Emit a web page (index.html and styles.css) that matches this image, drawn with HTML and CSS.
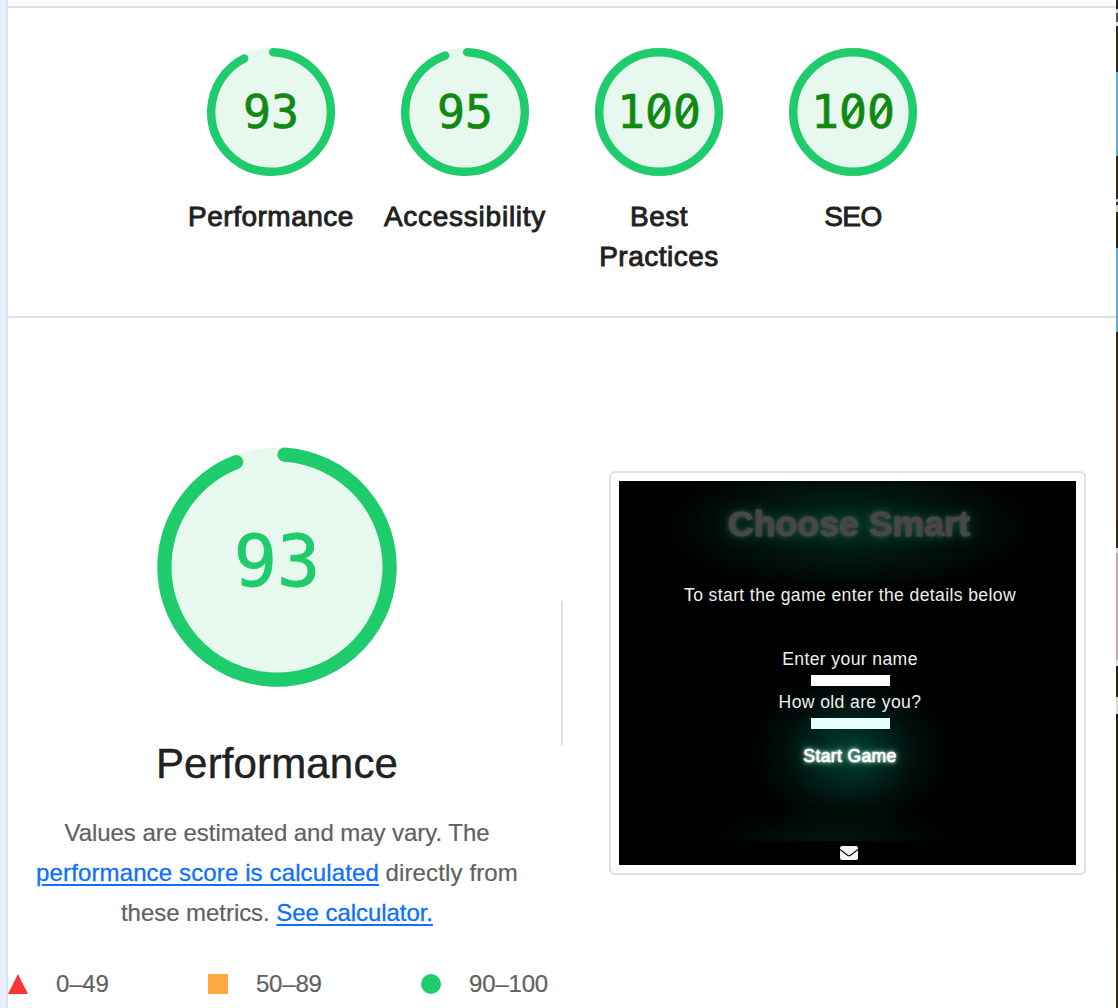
FILE: index.html
```
<!DOCTYPE html>
<html lang="en">
<head>
<meta charset="utf-8">
<title>Report</title>
<link rel="stylesheet" href="styles.css">
</head>
<body>
<div class="page">
  <div class="rail"></div>
  <main class="report">
    <section class="scores">
      <div class="score">
        <svg class="gauge" viewBox="0 0 128 128">
          <circle class="base" cx="64" cy="64" r="64"/>
          <circle class="arc" cx="64" cy="64" r="59.8" stroke-dasharray="345.3 400" transform="rotate(-88 64 64)"/>
          <text class="num" x="64" y="80">93</text>
        </svg>
        <div class="label">Performance</div>
      </div>
      <div class="score">
        <svg class="gauge" viewBox="0 0 128 128">
          <circle class="base" cx="64" cy="64" r="64"/>
          <circle class="arc" cx="64" cy="64" r="59.8" stroke-dasharray="353 400" transform="rotate(-88 64 64)"/>
          <text class="num" x="64" y="80">95</text>
        </svg>
        <div class="label access">Accessibility</div>
      </div>
      <div class="score">
        <svg class="gauge" viewBox="0 0 128 128">
          <circle class="base" cx="64" cy="64" r="64"/>
          <circle class="arc" cx="64" cy="64" r="59.8"/>
          <text class="num" x="64" y="80">100</text>
          <ellipse class="hole" cx="64" cy="63" rx="5" ry="10"/>
          <ellipse class="hole" cx="92" cy="63" rx="5" ry="10"/>
          <path class="slash" d="M57.5 72.5 70 54.5M85.5 72.5 98 54.5"/>
        </svg>
        <div class="label">Best<br>Practices</div>
      </div>
      <div class="score">
        <svg class="gauge" viewBox="0 0 128 128">
          <circle class="base" cx="64" cy="64" r="64"/>
          <circle class="arc" cx="64" cy="64" r="59.8"/>
          <text class="num" x="64" y="80">100</text>
          <ellipse class="hole" cx="64" cy="63" rx="5" ry="10"/>
          <ellipse class="hole" cx="92" cy="63" rx="5" ry="10"/>
          <path class="slash" d="M57.5 72.5 70 54.5M85.5 72.5 98 54.5"/>
        </svg>
        <div class="label seo">SEO</div>
      </div>
    </section>
    <section class="category">
      <div class="summary">
        <svg class="gauge-big" viewBox="0 0 240 240">
          <circle class="base" cx="120" cy="120" r="119.5"/>
          <circle class="arc" cx="120" cy="120" r="112.6" stroke-dasharray="657.5 800" transform="rotate(-86.2 120 120)"/>
          <text class="num" x="120" y="139">93</text>
        </svg>
        <h1 class="title">Performance</h1>
        <p class="desc">Values are estimated and may vary. The<br><a class="link wide">performance score is calculated</a> <span class="wide">directly from</span><br>these metrics. <a class="link">See calculator.</a></p>
        <div class="legend">
          <span class="range"><svg class="mark" viewBox="0 0 20 20"><path fill="#ff3333" d="M0 20 10 0 20 20z"/></svg>0–49</span>
          <span class="range"><svg class="mark" viewBox="0 0 20 20"><path fill="#ffa940" d="M0 0h20v20H0z"/></svg>50–89</span>
          <span class="range"><svg class="mark" viewBox="0 0 20 20"><circle fill="#1fcc6b" cx="10" cy="10" r="10"/></svg>90–100</span>
        </div>
      </div>
      <div class="divider"></div>
      <div class="frame">
        <div class="shot">
          <div class="game-title">Choose Smart</div>
          <div class="line intro">To start the game enter the details below</div>
          <div class="line">Enter your name</div>
          <div class="field"></div>
          <div class="line">How old are you?</div>
          <div class="field tinted"></div>
          <div class="line start">Start Game</div>
          <div class="floor"></div>
          <svg class="mail" viewBox="0 0 18 14"><rect width="18" height="14" rx="2" fill="#f4f4f4"/><path d="M0 3.5 7.5 9.2Q9 10.3 10.5 9.2L18 3.5" fill="none" stroke="#111" stroke-width="1.2"/></svg>
        </div>
      </div>
    </section>
  </main>
  <div class="backdrop"></div>
</div>
</body>
</html>
```
FILE: styles.css
```
* { box-sizing: border-box; }
body { margin: 0; background: #fff; font-family: "Liberation Sans", Arial, sans-serif; color: #212121; }
.page { display: flex; width: 1118px; height: 1008px; overflow: hidden; }
.rail { width: 8px; flex: none; background: #e9eef9; border-right: 2px solid #d3e3fd; }
.report { width: 1108px; flex: none; padding-top: 6px; }
.backdrop {
  width: 2px; flex: none;
  background: linear-gradient(#29291a 0 9px, #d8d8d8 9px 13px, #555 13px 22px, #d8d8d8 22px 26px, #33291e 26px 72px, #62abcd 72px 156px, #33271c 156px 199px, #ccc 199px 202px, #333 202px 205px, #ccc 205px 212px, #29291a 212px 248px, #62abcd 248px 332px, #33271c 332px 400px, #413023 400px 520px, #30291a 520px 548px, #ddd 548px 553px, #baa5aa 553px 660px, #ddd 660px 666px, #26290f 666px 697px, #d8d8d8 697px 714px, #202510 714px 860px, #33271c 940px);
}
.scores { height: 312px; border-top: 2px solid #e0e0e0; border-bottom: 2px solid #e0e0e0; display: flex; justify-content: center; padding-top: 40px; }
.score { width: 194px; text-align: center; }
.gauge { display: block; width: 128px; height: 128px; margin: 0 auto 21px; }
.label { font-size: 28px; line-height: 40px; letter-spacing: .5px; -webkit-text-stroke: .9px #212121; }
.access { letter-spacing: .75px; }
.seo { letter-spacing: -.5px; }
.base { fill: #e7f8ef; }
.arc { fill: none; stroke: #1fcc6b; stroke-width: 8.4; stroke-linecap: round; }
.num { font: 46.5px "DejaVu Sans Mono", monospace; fill: #118811; stroke: #118811; stroke-width: .7; text-anchor: middle; }
.hole { fill: #e7f8ef; }
.slash { stroke: #118811; stroke-width: 3.6; }
.category { display: flex; }
.summary { width: 538px; padding-top: 129px; text-align: center; }
.gauge-big { display: block; width: 240px; height: 240px; margin: 0 auto; }
.gauge-big .arc { stroke-width: 14.2; }
.gauge-big .num { font-size: 72px; fill: #1fcc6b; stroke: #1fcc6b; stroke-width: .8; }
.title { margin: 52px 0 0; font-size: 42px; line-height: 50px; font-weight: 400; letter-spacing: .15px; -webkit-text-stroke: .4px #212121; }
.desc { margin: 24px 0 0; font-size: 24px; line-height: 40px; color: #616161; white-space: nowrap; letter-spacing: -.05px; -webkit-text-stroke: .2px #616161; }
.wide { letter-spacing: .13px; }
.link { color: #0f6fff; text-decoration: underline; text-decoration-thickness: 2px; text-underline-offset: 3px; -webkit-text-stroke: .3px #0f6fff; }
.legend { display: flex; justify-content: space-between; width: 540px; margin-top: 31px; font-size: 24px; line-height: 40px; color: #616161; -webkit-text-stroke: .2px #616161; }
.range { display: flex; align-items: center; gap: 28px; letter-spacing: -.2px; }
.mark { width: 20px; height: 20px; display: block; }
.divider { width: 2px; height: 144px; margin: 283px 46px 0 15px; background: #e0e0e0; }
.frame { width: 477px; height: 404px; margin-top: 153px; border: 2px solid #e0e0e0; border-radius: 6px; padding: 8px; }
.shot {
  height: 384px; width: 457px; overflow: hidden; color: #eee; display: flex; flex-direction: column; align-items: center;
  background:
    radial-gradient(ellipse 100px 80px at 231px 272px, #004434 0%, #002a20 32%, #000e0b 68%, transparent 100%),
    radial-gradient(ellipse 190px 68px at 230px 44px, #03301f 0%, #02160e 50%, transparent 100%),
    #000;
}
.game-title { margin-top: 21px; margin-left: 3px; font-size: 35.5px; line-height: 44px; font-weight: 700; letter-spacing: .1px; color: #474747; -webkit-text-stroke: .8px #474747; text-shadow: 0 0 3px #474747, 0 0 6px #3a4d44, 0 0 16px #065035; }
.line { font-size: 17.6px; line-height: 22px; letter-spacing: .37px; margin-left: 5px; white-space: nowrap; }
.intro { margin-top: 38px; margin-bottom: 42px; }
.field { width: 79px; height: 11px; margin: 5px 0 5px 5px; background: #fff; }
.tinted { background: #e8ffff; margin-bottom: 16px; }
.start { color: #fff; letter-spacing: .33px; -webkit-text-stroke: .6px #fff; text-shadow: 0 0 3px #fff, 0 0 6px #d0ffe8, 0 0 14px #006d4a; }
.floor { width: 320px; height: 40px; margin-top: 34px; background: radial-gradient(ellipse 130px 36px at 145px 40px, #00170b, transparent); }
.mail { width: 18px; height: 14px; flex: none; display: block; margin-top: 5px; margin-left: 2px; }
```
